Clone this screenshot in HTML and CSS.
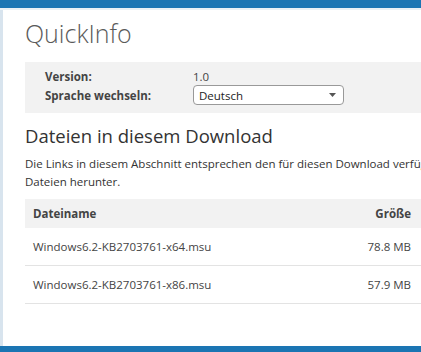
FILE: index.html
```html
<!DOCTYPE html>
<html lang="de">
<head>
<meta charset="utf-8">
<title>QuickInfo</title>
<link rel="stylesheet" href="styles.css">
</head>
<body>
<div class="topbar"></div>
<div class="frame">
  <div class="content">
    <h1 class="title">QuickInfo</h1>
    <div class="info">
      <div class="info-row">
        <span class="info-label">Version:</span>
        <span class="info-value">1.0</span>
      </div>
      <div class="info-row">
        <span class="info-label">Sprache wechseln:</span>
        <div class="select">
          <span>Deutsch</span>
          <svg class="arrow" width="7" height="4" viewBox="0 0 7 4"><path d="M0 0h7L3.5 4z" fill="#555"/></svg>
        </div>
      </div>
    </div>
    <h2 class="section">Dateien in diesem Download</h2>
    <p class="desc">Die Links in diesem Abschnitt entsprechen den für diesen Download verfügbaren<br>Dateien herunter.</p>
    <div class="table">
      <div class="row head">
        <span class="c-name">Dateiname</span>
        <span class="c-size">Größe</span>
      </div>
      <div class="row">
        <span class="c-name">Windows6.2-KB2703761-x64.msu</span>
        <span class="c-size">78.8 MB</span>
      </div>
      <div class="row">
        <span class="c-name">Windows6.2-KB2703761-x86.msu</span>
        <span class="c-size">57.9 MB</span>
      </div>
    </div>
  </div>
</div>
<div class="bottombar"></div>
</body>
</html>
```
FILE: styles.css
```css
html, body {
  margin: 0;
  padding: 0;
}
body {
  width: 421px;
  height: 352px;
  overflow: hidden;
  background: #fff;
  font-family: "Open Sans", "Noto Sans", sans-serif;
  color: #333;
  display: flex;
  flex-direction: column;
}
.topbar {
  height: 8px;
  flex: none;
  background: #1b75b3;
  border-bottom: 2px solid #e9f0f5;
}
.frame {
  flex: 1;
  border-left: 3px solid #d8e4ee;
  padding-left: 22px;
  overflow: hidden;
}
.content {
  width: 480px;
}
.title {
  margin: 7px 0 0;
  font-size: 25px;
  font-weight: 300;
  line-height: 32px;
  color: #5a5a5a;
}
.info {
  margin-top: 13px;
  background: #f2f2f2;
  padding: 5px 0 6px 20px;
  height: 40px;
}
.info-row {
  display: flex;
  align-items: center;
  font-size: 11.5px;
}
.info-row:first-child {
  height: 18px;
}
.info-label {
  width: 148px;
  font-weight: 700;
  color: #444;
}
.info-value {
  color: #444;
}
.select {
  height: 18px;
  border: 1px solid #999;
  border-radius: 4px;
  background: #fff;
  display: flex;
  align-items: center;
  justify-content: space-between;
  padding: 0 7px 0 5px;
  box-sizing: content-box;
  width: 137px;
  color: #222;
}
.arrow {
  display: block;
}
.section {
  margin: 10px 0 0;
  font-size: 18.5px;
  font-weight: 400;
  line-height: 26px;
  color: #333;
}
.desc {
  margin: 6px 0 0;
  font-size: 11.5px;
  line-height: 18px;
  color: #333;
  white-space: nowrap;
}
.table {
  margin-top: 8px;
  width: 460px;
}
.row {
  display: flex;
  align-items: center;
  height: 37px;
  border-bottom: 1px solid #e3e3e3;
  font-size: 11.5px;
  color: #444;
}
.row.head {
  height: 29px;
  background: #f2f2f2;
  border-bottom: none;
  font-weight: 700;
}
.c-name {
  padding-left: 8px;
  width: 331px;
}
.c-size {
  width: 47px;
  text-align: right;
}
.bottombar {
  height: 6px;
  flex: none;
  background: #1b75b3;
}
```
